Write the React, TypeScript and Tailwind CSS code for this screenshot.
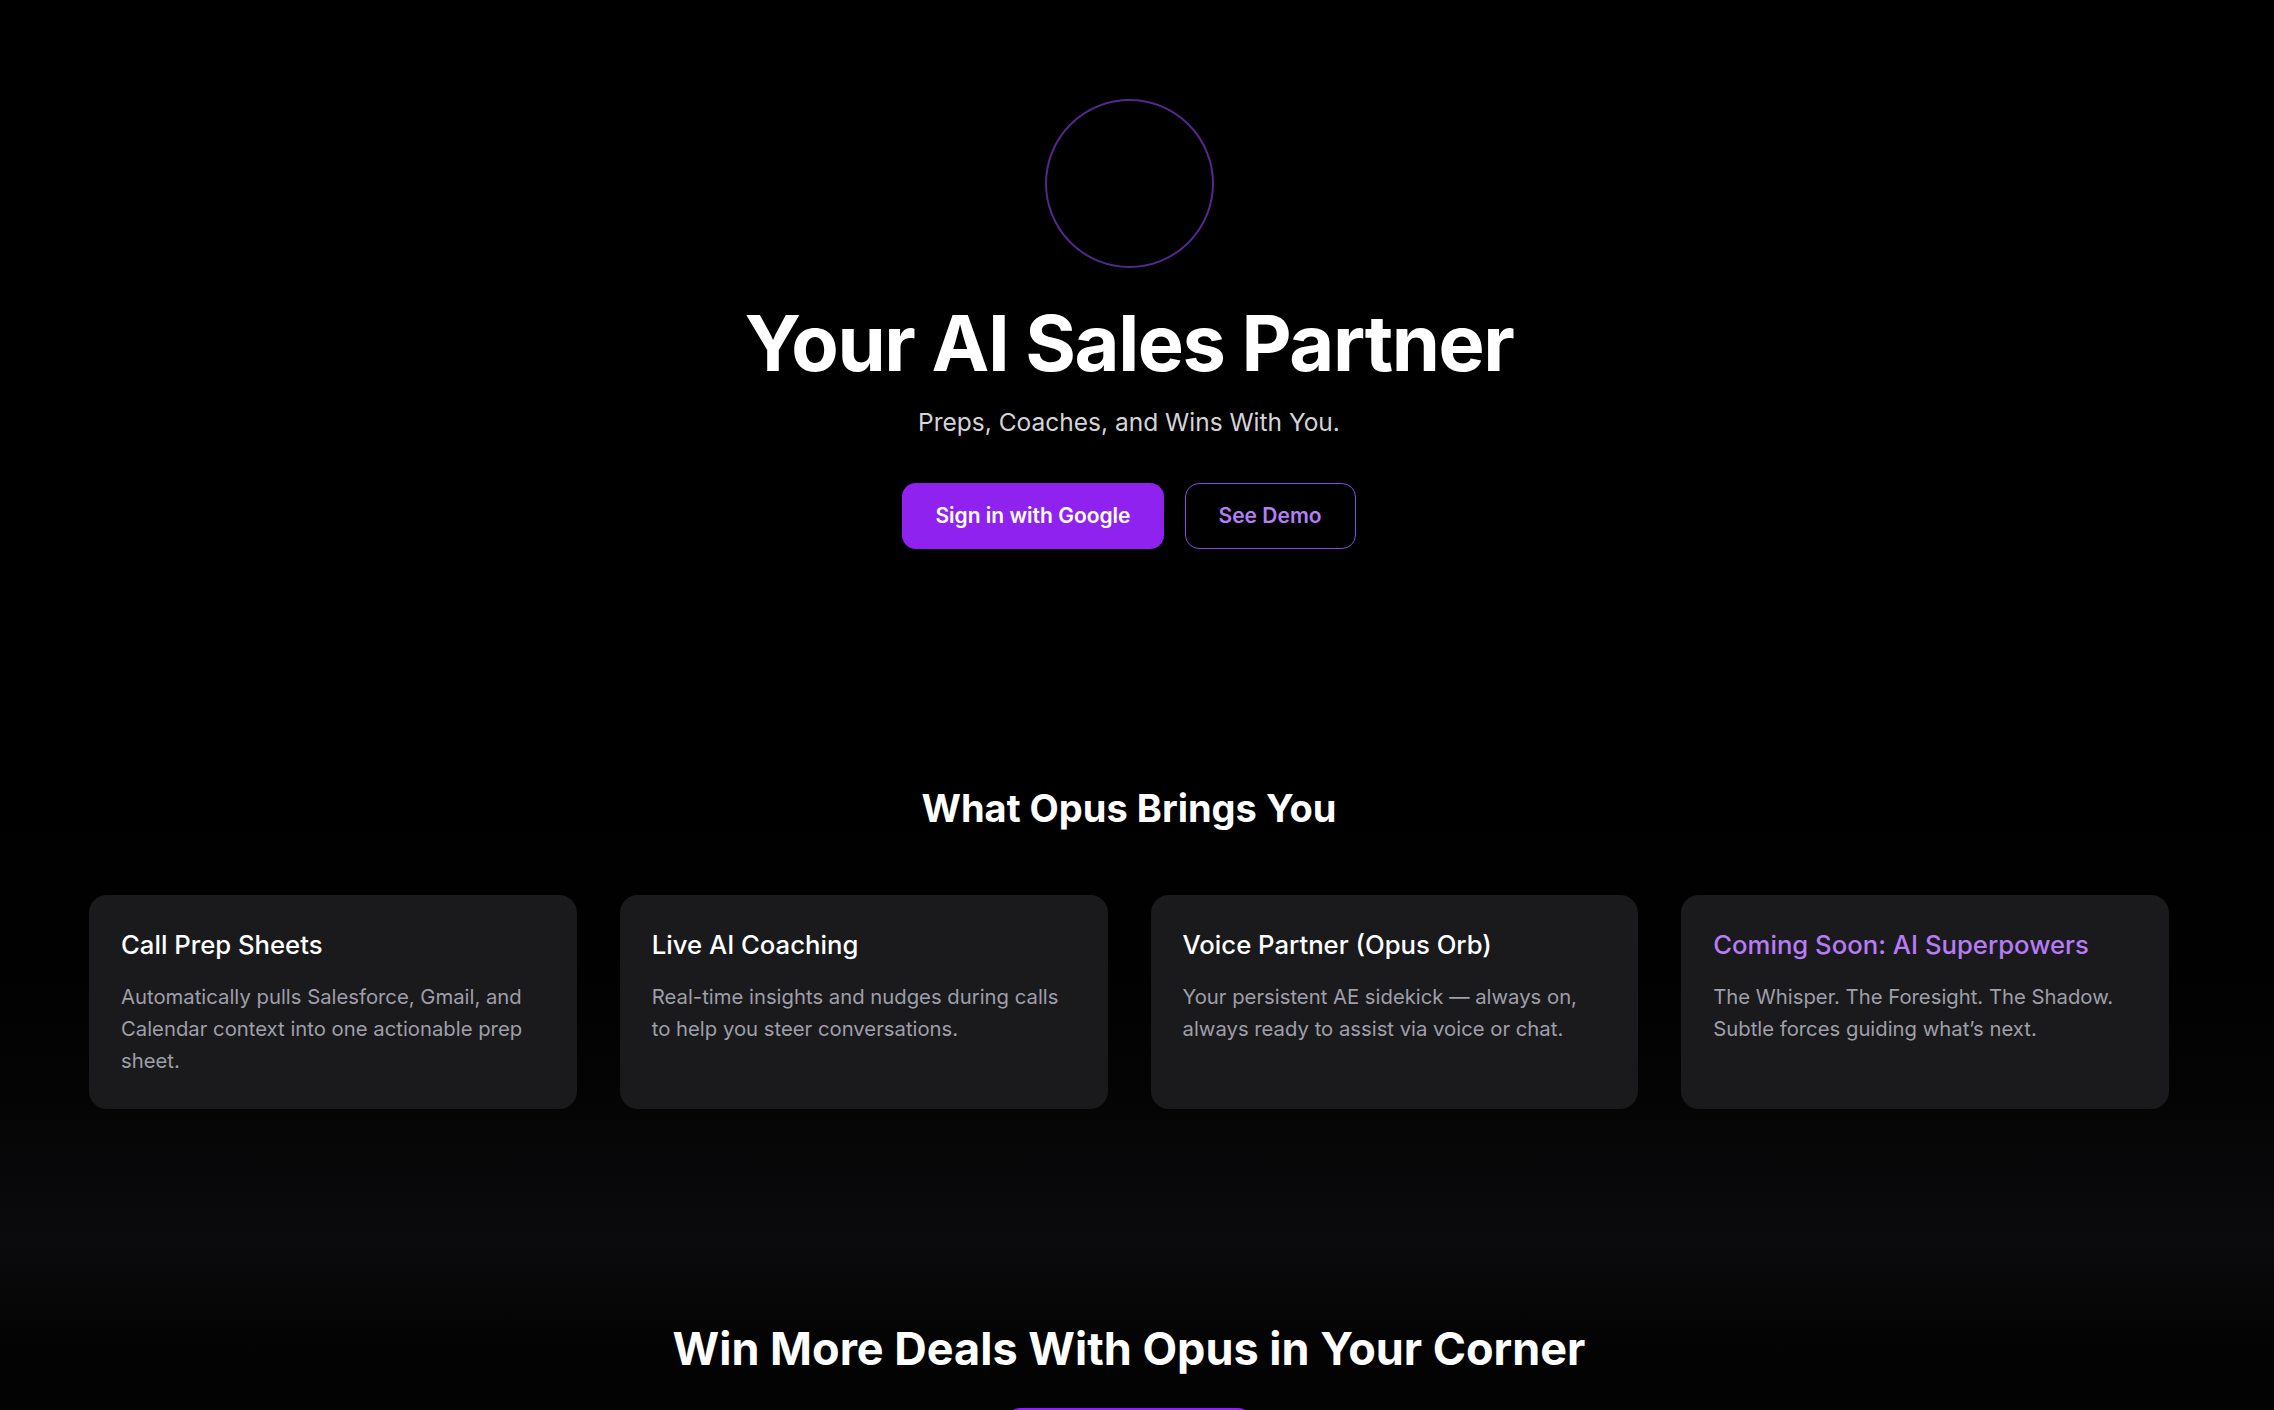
import React from 'react';

interface Feature {
  title: string;
  body: string;
  soon?: boolean;
}

const features: Array<Feature> = [
  {
    title: 'Call Prep Sheets',
    body: 'Automatically pulls Salesforce, Gmail, and Calendar context into one actionable prep sheet.',
  },
  {
    title: 'Live AI Coaching',
    body: 'Real-time insights and nudges during calls to help you steer conversations.',
  },
  {
    title: 'Voice Partner (Opus Orb)',
    body: 'Your persistent AE sidekick — always on, always ready to assist via voice or chat.',
  },
  {
    title: 'Coming Soon: AI Superpowers',
    body: 'The Whisper. The Foresight. The Shadow. Subtle forces guiding what’s next.',
    soon: true,
  },
];

export default function App() {
  return (
    <div className="h-screen overflow-hidden bg-black text-white font-[Inter,sans-serif] antialiased">
      {/* hero */}
      <section className="flex flex-col items-center pt-[99px] pb-[140px] pr-[16px]">
        <div className="w-[169px] h-[169px] rounded-full border-2 border-[#55278f]"></div>
        <h1 className="mt-[33px] text-[77.5px] leading-[85px] font-bold tracking-[-0.018em]">
          Your AI Sales Partner
        </h1>
        <p className="mt-[18px] text-[24.5px] leading-[36px] text-[#d4d4d8]">
          Preps, Coaches, and Wins With You.
        </p>
        <div className="mt-[43px] flex gap-[21px]">
          <button className="h-[66px] px-[33px] rounded-[14px] bg-[#8f22ef] text-[21px] font-semibold text-white">
            Sign in with Google
          </button>
          <button className="h-[66px] px-[33px] rounded-[14px] border border-[#8b45e6] text-[21px] font-semibold text-[#b57ef5]">
            See Demo
          </button>
        </div>
      </section>

      {/* features */}
      <section className="pl-[89px] pr-[105px] pt-[96px] pb-[131px] bg-gradient-to-b from-black to-[#0b0b0d]">
        <h2 className="text-center text-[38px] leading-[46px] font-bold">
          What Opus Brings You
        </h2>
        <div className="mt-[64px] grid grid-cols-4 gap-[43px]">
          {features.map((f) => (
            <div key={f.title} className="rounded-[18px] bg-[#1a1a1d] p-8">
              <div
                className={
                  f.soon
                    ? 'text-[25.7px] leading-[36px] font-medium text-[#b77cf5]'
                    : 'text-[25.7px] leading-[36px] font-medium text-white'
                }
              >
                {f.title}
              </div>
              <p className="mt-[18px] text-[20.3px] leading-[32px] text-[#9f9fa9]">
                {f.body}
              </p>
            </div>
          ))}
        </div>
      </section>

      {/* cta */}
      <section className="flex flex-col items-center pt-[82px] pb-[120px] pr-[16px] bg-[linear-gradient(to_bottom,#0b0b0d,#030303_110px)]">
        <h2 className="text-[45px] leading-[54px] font-bold">
          Win More Deals With Opus in Your Corner
        </h2>
        <button className="mt-[32px] h-[66px] px-[40px] rounded-[14px] bg-[#8f22ef] text-[21px] font-semibold text-white">
          Get Started Free
        </button>
      </section>
    </div>
  );
}
